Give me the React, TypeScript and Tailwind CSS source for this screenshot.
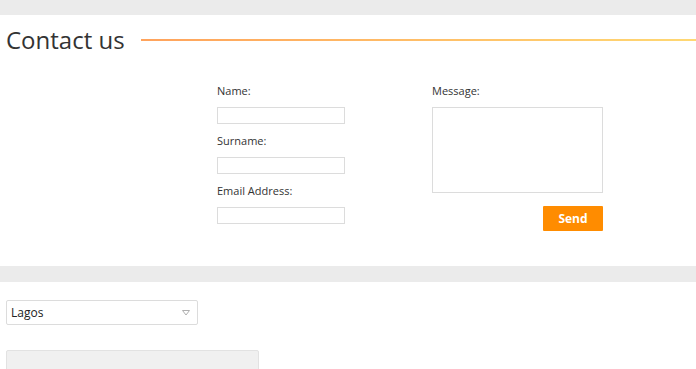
function Field({ label }: { label: string }) {
  return (
    <div className="flex flex-col">
      <label className="h-[23px] text-[11px] leading-[14px] text-[#333]">{label}</label>
      <input className="h-[17px] w-[128px] border border-[#dcdcdc] bg-white" />
    </div>
  );
}

export default function App() {
  return (
    <div className="min-h-[369px] bg-white font-['Open_Sans',sans-serif]">
      {/* top band */}
      <div className="h-[15px] bg-[#ebebeb]" />

      {/* contact section */}
      <section className="h-[251px]">
        <div className="flex items-center pt-[10px]">
          <h1 className="pl-[6px] text-[24px] leading-[30px] text-[#333]">Contact us</h1>
          <div className="ml-[16px] h-[2px] flex-1 bg-gradient-to-r from-[#ffa35c] to-[#ffd873]" />
        </div>

        <div className="ml-[217px] mt-[29px] flex">
          <div className="flex w-[215px] flex-col gap-[10px]">
            <Field label="Name:" />
            <Field label="Surname:" />
            <Field label="Email Address:" />
          </div>
          <div className="flex w-[171px] flex-col">
            <label className="h-[23px] text-[11px] leading-[14px] text-[#333]">Message:</label>
            <textarea className="h-[86px] w-[171px] resize-none border border-[#dcdcdc] bg-white" />
            <div className="mt-[13px] flex justify-end">
              <button className="h-[25px] w-[60px] rounded-[1px] bg-[#ff8c00] text-[12px] font-bold text-white">
                Send
              </button>
            </div>
          </div>
        </div>
      </section>

      {/* second band */}
      <div className="h-[16px] bg-[#ebebeb]" />

      {/* location */}
      <section className="px-[6px] pt-[18px]">
        <div className="flex h-[25px] w-[192px] items-center justify-between rounded-[2px] border border-[#dcdcdc] bg-white pl-[4px] pr-[7px]">
          <span className="text-[12px] text-[#222]">Lagos</span>
          <svg width="8" height="6" viewBox="0 0 8 6">
            <path d="M0.5 0.5 H7.5 L4 5 Z" fill="none" stroke="#b0b0b0" strokeWidth="1" />
          </svg>
        </div>
        <div className="mt-[25px] h-[30px] w-[253px] rounded-t-[2px] border border-[#e2e2e2] bg-[#f0f0f0]" />
      </section>
    </div>
  );
}
